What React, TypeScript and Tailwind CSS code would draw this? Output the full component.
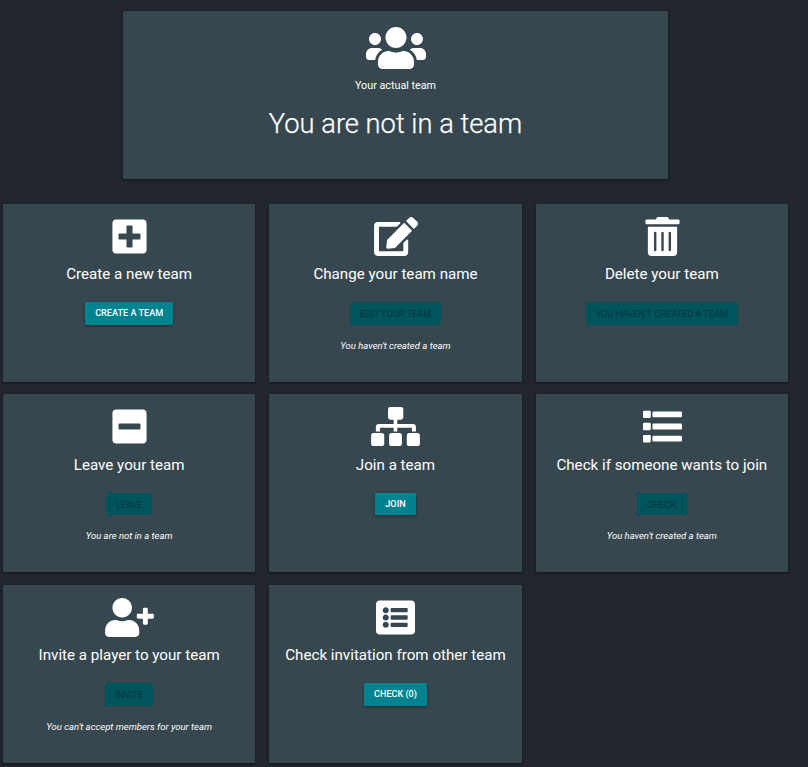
import { FaUsers, FaPlusSquare, FaEdit, FaTrashAlt, FaMinusSquare, FaUserPlus, FaListAlt } from 'react-icons/fa';
import type { ComponentType } from 'react';

type IconProps = { className?: string };

function ListIcon({ className }: IconProps) {
  return (
    <svg viewBox="0 0 512 512" fill="currentColor" className={className}>
      {[0, 160, 320].map((y) => (
        <g key={y}>
          <rect x="0" y={48 + y} width="102" height="98" rx="14" />
          <rect x="124" y={58 + y} width="388" height="76" rx="16" />
        </g>
      ))}
    </svg>
  );
}

function SitemapIcon({ className }: IconProps) {
  return (
    <svg viewBox="0 0 640 512" fill="currentColor" className={className}>
      <rect x="222" y="0" width="200" height="166" rx="30" />
      <path d="M296 150h48v72h204q40 0 40 40v60h-52v-48H344v48h-48v-48H116v48H62v-60q0-40 40-40h194z" />
      <rect x="0" y="340" width="172" height="172" rx="34" />
      <rect x="236" y="340" width="168" height="172" rx="34" />
      <rect x="468" y="340" width="172" height="172" rx="34" />
    </svg>
  );
}

type Card = { icon: ComponentType<IconProps>; size: string; title: string; button: string; active?: boolean; note?: string };

const cards: Card[] = [
  { icon: FaPlusSquare, size: 'w-[39px]', title: 'Create a new team', button: 'CREATE A TEAM', active: true },
  { icon: FaEdit, size: 'w-[44px]', title: 'Change your team name', button: 'EDIT YOUR TEAM', note: "You haven't created a team" },
  { icon: FaTrashAlt, size: 'w-[39px]', title: 'Delete your team', button: "YOU HAVEN'T CREATED A TEAM" },
  { icon: FaMinusSquare, size: 'w-[39px]', title: 'Leave your team', button: 'LEAVE', note: 'You are not in a team' },
  { icon: SitemapIcon, size: 'w-[49px]', title: 'Join a team', button: 'JOIN', active: true },
  { icon: ListIcon, size: 'w-[39px]', title: 'Check if someone wants to join', button: 'CHECK', note: "You haven't created a team" },
  { icon: FaUserPlus, size: 'w-[49px]', title: 'Invite a player to your team', button: 'INVITE', note: "You can't accept members for your team" },
  { icon: FaListAlt, size: 'w-[39px]', title: 'Check invitation from other team', button: 'CHECK (0)', active: true },
];

const panel = 'flex flex-col items-center rounded-[1px] bg-[#37474f] shadow-[0_1px_3px_rgba(0,0,0,0.3),0_1px_2px_rgba(0,0,0,0.25)]';

export default function App() {
  return (
    <main className="h-[767px] w-[808px] overflow-hidden bg-[#22262f] pt-[11px] font-[Roboto,sans-serif] text-white">
      <section className={`ml-[123px] h-[168px] w-[545px] pt-[13px] ${panel}`}>
        <FaUsers className="h-[48px] w-[60px]" />
        <p className="mt-[6px] text-[10.75px] leading-[16px]">Your actual team</p>
        <h1 className="mt-[13px] text-[27.3px] leading-[34px] font-light [-webkit-text-stroke:0.25px_white]">You are not in a team</h1>
      </section>
      <div className="mt-[25px] ml-[3px] grid w-[785px] grid-cols-3 gap-x-[14px] gap-y-[12.4px]">
        {cards.map((c) => (
          <section key={c.title} className={`h-[178px] pt-[13px] ${panel}`}>
            <c.icon className={`ml-px h-[39px] ${c.size}`} />
            <h2 className="mt-[6.2px] text-[15.15px] leading-[24px]">{c.title}</h2>
            <button
              disabled={!c.active}
              className={`mt-[16px] h-[22.8px] rounded-[1px] px-[10px] text-[9.1px] leading-[22.8px] ${c.active ? 'bg-[#00838f] font-medium shadow-[0_1px_3px_rgba(0,0,0,0.4)]' : 'bg-[#00545c] pt-px font-light tracking-[0.07px] text-[#06272e]'}`}
            >
              {c.button}
            </button>
            {c.note && <p className="mt-[13px] text-[9.5px] leading-[15px] italic">{c.note}</p>}
          </section>
        ))}
      </div>
    </main>
  );
}
